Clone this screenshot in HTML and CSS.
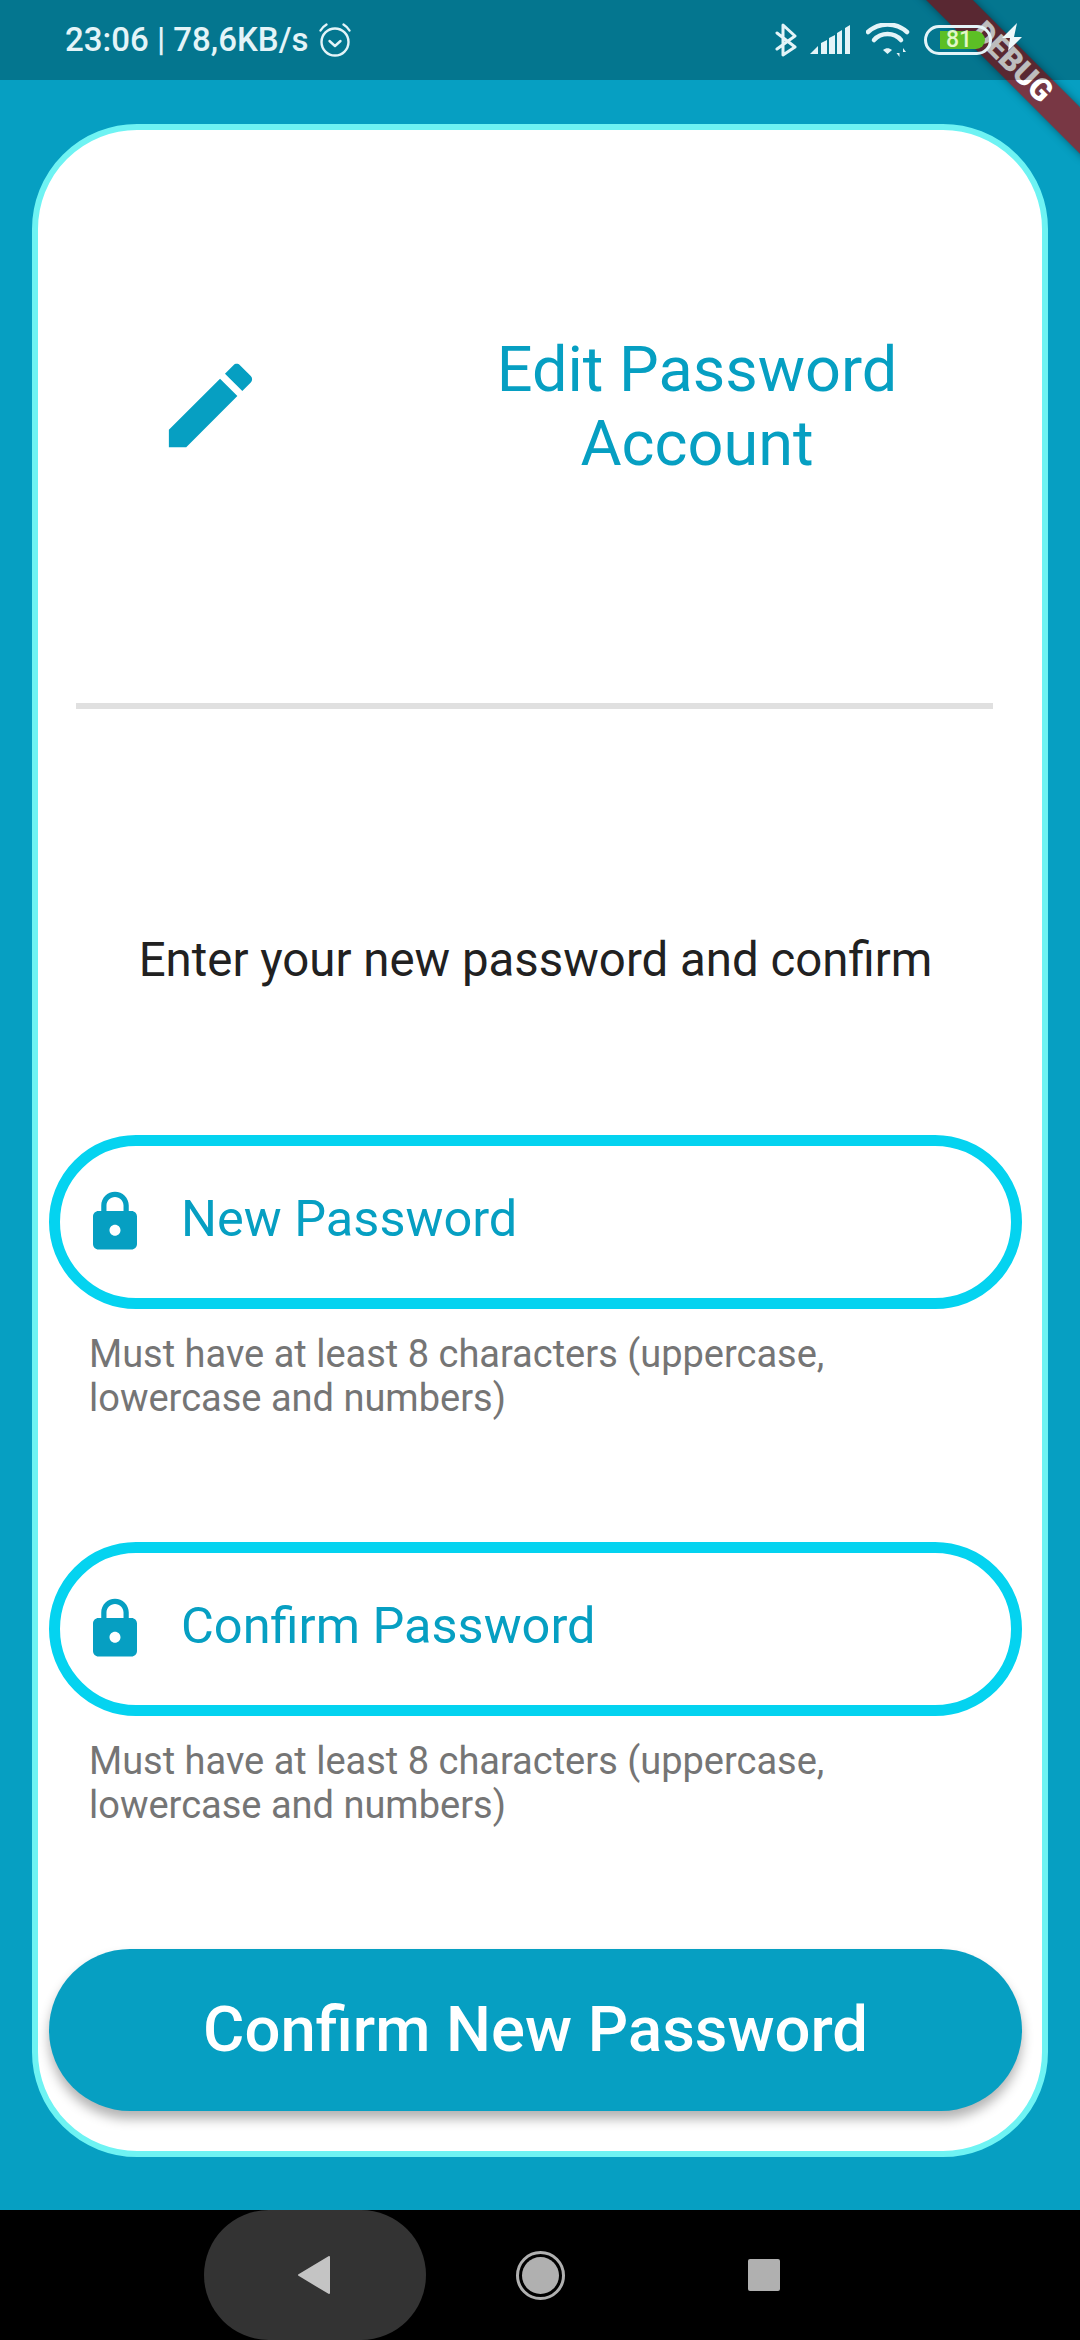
FILE: index.html
```html
<!doctype html>
<html>
<head>
<meta charset="utf-8">
<title>Edit Password Account</title>
<link rel="stylesheet" href="styles.css">
</head>

<body>
<div class="phone">
	<div class="status">
		<div class="status-left">
			<span class="status-text">23:06 | 78,6KB/s</span>
			<svg class="ic-alarm" viewBox="0 0 34 36" fill="none" stroke="#e4f4f8" stroke-width="2.4" stroke-linecap="round" stroke-linejoin="round">
				<circle cx="17" cy="20" r="13.5"/>
				<path d="M11.5 19l5.5 5 5.5-5"/>
				<path d="M2.5 8.5C4 6 6 4 8.5 2.5M31.5 8.5C30 6 28 4 25.5 2.5"/>
			</svg>
		</div>
		<div class="status-right">
			<svg class="ic-bt" viewBox="0 0 22 34" fill="none" stroke="#e4f4f8" stroke-width="3" stroke-linejoin="round" stroke-linecap="round">
				<path d="M2 10L20 24 8 32V2l12 11L2 26"/>
			</svg>
			<svg class="ic-signal" viewBox="0 0 41 30" fill="#e4f4f8">
				<path d="M0 29l8-8v8zM11 29V18l6-3v14zM19 29V13l6-3v19zM27 29V8l5-3v24zM35 29V3l5-3v29z"/>
			</svg>
			<svg class="ic-wifi" viewBox="0 0 44 34" fill="none" stroke="#e4f4f8" stroke-width="4.500" stroke-linecap="round">
				<path d="M2 9C13-1 30-1 41 9"/>
				<path d="M8 17C15 9 28 9 35 17"/>
				<path d="M17 27c3-2.500 6-2.500 9 0l-4.500 4z" fill="#e4f4f8" stroke="none"/>
				<path d="M33.500 25v9l-3-4h3zM37 34v-9l3 4h-3z" fill="#e4f4f8" stroke="none"/>
			</svg>
			<div class="battery"><div class="battery-fill">81</div></div>
			<svg class="ic-bolt" viewBox="0 0 20 34" fill="#eef8fa">
				<path d="M15 0L0 15h8L6 28l14-14h-8z"/>
			</svg>
		</div>
	</div>

	<div class="page">
		<div class="card">
			<div class="head">
				<svg class="ic-edit" viewBox="0 0 24 24" fill="#069fc2">
					<path d="M3 17.250V21h3.750L17.810 9.940l-3.750-3.750L3 17.250zM20.710 7.040c.39-.39.39-1.020 0-1.410l-2.340-2.340c-.39-.39-1.020-.39-1.410 0l-1.830 1.830 3.750 3.750 1.830-1.830z"/>
				</svg>
				<h1 class="title">Edit Password<br>Account</h1>
			</div>
			<div class="line"></div>
			<p class="intro">Enter your new password and confirm</p>

			<div class="group group-first">
				<div class="field">
					<svg class="ic-lock" viewBox="0 0 24 24" fill="#069fc2">
						<path d="M18 8h-1V6c0-2.760-2.240-5-5-5S7 3.240 7 6v2H6c-1.100 0-2 .9-2 2v10c0 1.100.9 2 2 2h12c1.100 0 2-.9 2-2V10c0-1.100-.9-2-2-2zm-6 9c-1.100 0-2-.9-2-2s.9-2 2-2 2 .9 2 2-.9 2-2 2zm3.100-9H8.900V6c0-1.710 1.390-3.100 3.100-3.100 1.710 0 3.100 1.390 3.100 3.100v2z"/>
					</svg>
					<span class="label">New Password</span>
				</div>
				<p class="hint">Must have at least 8 characters (uppercase, lowercase and numbers)</p>
			</div>

			<div class="group">
				<div class="field">
					<svg class="ic-lock" viewBox="0 0 24 24" fill="#069fc2">
						<path d="M18 8h-1V6c0-2.760-2.240-5-5-5S7 3.240 7 6v2H6c-1.100 0-2 .9-2 2v10c0 1.100.9 2 2 2h12c1.100 0 2-.9 2-2V10c0-1.100-.9-2-2-2zm-6 9c-1.100 0-2-.9-2-2s.9-2 2-2 2 .9 2 2-.9 2-2 2zm3.100-9H8.900V6c0-1.710 1.390-3.100 3.100-3.100 1.710 0 3.100 1.390 3.100 3.100v2z"/>
					</svg>
					<span class="label">Confirm Password</span>
				</div>
				<p class="hint">Must have at least 8 characters (uppercase, lowercase and numbers)</p>
			</div>

			<div class="btn">Confirm New Password</div>
		</div>
	</div>

	<div class="nav">
		<div class="nav-back">
			<svg class="ic-back" viewBox="0 0 32 38" fill="#c4c4c4" stroke="#c4c4c4" stroke-width="2" stroke-linejoin="round">
				<path d="M31 1v36L1 19z"/>
			</svg>
		</div>
		<div class="nav-home"><div class="nav-dot"></div></div>
		<div class="nav-square"></div>
	</div>

	<div class="banner">DEBUG</div>
</div>
</body>
</html>
```

FILE: styles.css
```css
*{margin:0; padding:0; box-sizing:border-box;}
body{width:1080px; height:2340px; overflow:hidden; font-family:Roboto, "Liberation Sans", sans-serif; background:#069fc2;}
.phone{width:1080px; height:2340px; position:relative; overflow:hidden; display:flex; flex-direction:column;}

/* status bar is a see through layer, the ribbon shows under it */
.status{height:80px; position:relative; z-index:2; background:rgba(0,0,0,0.26); display:flex; justify-content:space-between; align-items:center; padding:0 58px 0 65px; color:#e4f4f8;}
.status-left{display:flex; align-items:center; gap:9px;}
.status-text{font-size:33px; font-weight:500; line-height:40px;}
.ic-alarm{width:34px; height:36px;}
.status-right{display:flex; align-items:center;}
.ic-bt{width:22px; height:34px; margin-right:13px;}
.ic-signal{width:41px; height:30px; margin-right:15px;}
.ic-wifi{width:44px; height:34px; margin-right:14px;}
.battery{width:68px; height:30px; border:3px solid #e4f4f8; border-radius:15px; padding:3px 4px 3px 13px; margin-right:10px;}
.battery-fill{height:18px; background:#5cbf25; border-radius:0 9px 9px 0; color:#e2f7c8; font-size:23px; font-weight:500; line-height:18px; padding-left:6px;}
.ic-bolt{width:20px; height:34px;}

.page{flex:1; padding:44px 32px 0;}
.card{height:2033px; background:#fff; border:6px solid #6ef3f3; border-radius:105px; padding:0 20px 0 11px;}

.head{height:551px; display:flex; align-items:center; padding-left:106px;}
.ic-edit{width:111px; height:111px; flex:none;}
.title{width:420px; margin-left:221px; padding-top:3px; font-size:63px; font-weight:400; line-height:74px; text-align:center; color:#069fc2;}
.line{height:6px; margin:22px 29px 0 27px; background:#e0e0e0;}
.intro{margin-top:221px; font-size:47.400px; line-height:60px; text-align:center; color:#212121;}

.group{margin-top:122px;}
.group-first{margin-top:145px;}
.field{height:174px; border:11px solid #04d3f0; border-radius:87px; display:flex; align-items:center; padding-left:22px;}
.ic-lock{width:66px; height:66px; flex:none;}
.label{margin-left:33px; margin-bottom:8px; font-size:50.500px; color:#069fc2;}
.hint{margin-top:23px; padding:0 90px 0 40px; font-size:38px; line-height:44px; color:#757575;}

.btn{height:162px; margin-top:122px; background:#069fc2; border-radius:81px; box-shadow:0 8px 12px rgba(0,0,0,0.3); color:#fff; font-size:63.400px; font-weight:500; line-height:160px; text-align:center;}

.nav{height:130px; background:#000; display:flex; align-items:center; padding-left:204px;}
.nav-back{width:222px; height:130px; background:#333; border-radius:65px/65px; display:flex; align-items:center; justify-content:center;}
.ic-back{width:32px; height:38px; margin-right:3px;}
.nav-home{width:49px; height:49px; margin-left:90px; border:3px solid #b0b0b0; border-radius:50%; padding:3px;}
.nav-dot{width:100%; height:100%; background:#b0b0b0; border-radius:50%;}
.nav-square{width:32px; height:32px; margin-left:183px; background:#b0b0b0; border-radius:2px;}

/* flutter debug ribbon */
.banner{position:absolute; z-index:1; top:46px; left:892px; width:240px; height:33px; transform:rotate(45deg); background:rgba(165,15,20,0.72); box-shadow:0 0 8px rgba(0,0,0,0.4); color:#fff; font-size:31px; font-weight:900; line-height:31px; text-align:center;}
```
